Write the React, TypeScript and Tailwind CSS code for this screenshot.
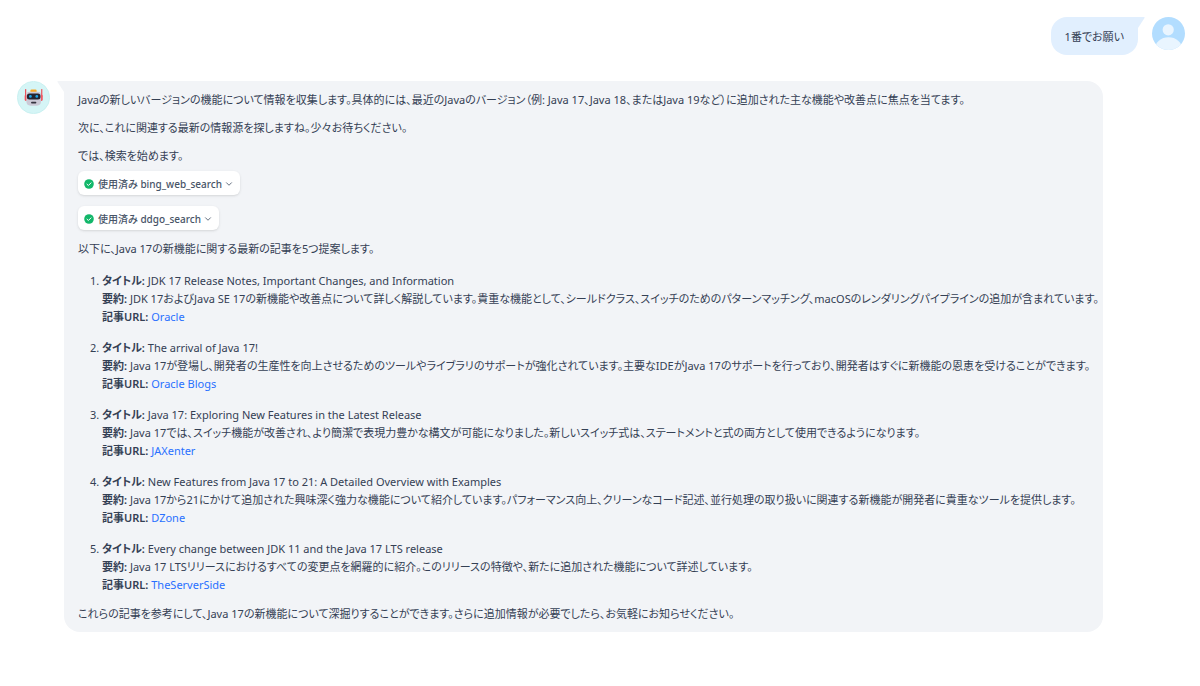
import React from "react";
import { ChevronDown } from "lucide-react";

type Article = {
  title: string;
  summary: string;
  link: string;
};

const articles: Article[] = [
  {
    title: "JDK 17 Release Notes, Important Changes, and Information",
    summary:
      "JDK 17およびJava SE 17の新機能や改善点について詳しく解説しています。貴重な機能として、シールドクラス、スイッチのためのパターンマッチング、macOSのレンダリングパイプラインの追加が含まれています。",
    link: "Oracle",
  },
  {
    title: "The arrival of Java 17!",
    summary:
      "Java 17が登場し、開発者の生産性を向上させるためのツールやライブラリのサポートが強化されています。主要なIDEがJava 17のサポートを行っており、開発者はすぐに新機能の恩恵を受けることができます。",
    link: "Oracle Blogs",
  },
  {
    title: "Java 17: Exploring New Features in the Latest Release",
    summary:
      "Java 17では、スイッチ機能が改善され、より簡潔で表現力豊かな構文が可能になりました。新しいスイッチ式は、ステートメントと式の両方として使用できるようになります。",
    link: "JAXenter",
  },
  {
    title: "New Features from Java 17 to 21: A Detailed Overview with Examples",
    summary:
      "Java 17から21にかけて追加された興味深く強力な機能について紹介しています。パフォーマンス向上、クリーンなコード記述、並行処理の取り扱いに関連する新機能が開発者に貴重なツールを提供します。",
    link: "DZone",
  },
  {
    title: "Every change between JDK 11 and the Java 17 LTS release",
    summary:
      "Java 17 LTSリリースにおけるすべての変更点を網羅的に紹介。このリリースの特徴や、新たに追加された機能について詳述しています。",
    link: "TheServerSide",
  },
];

function UserAvatar() {
  return (
    <svg viewBox="0 0 33 33" className="size-[33px] shrink-0" aria-hidden="true">
      <defs>
        <clipPath id="user-clip">
          <circle cx="16.5" cy="16.5" r="16.5" />
        </clipPath>
      </defs>
      <g clipPath="url(#user-clip)">
        <rect width="33" height="33" fill="#b2ddff" />
        <circle cx="16.2" cy="12.8" r="5.6" fill="#e9f5ff" />
        <ellipse cx="16.5" cy="32" rx="13.6" ry="11.8" fill="#e9f5ff" />
      </g>
    </svg>
  );
}

function BotAvatar() {
  return (
    <svg viewBox="0 0 34 34" className="size-[33px] shrink-0" aria-hidden="true">
      <circle cx="17" cy="17" r="16.6" fill="#d5f5f6" stroke="#c3eeee" strokeWidth="0.8" />
      <rect x="8.3" y="8.2" width="1.2" height="8" rx="0.6" fill="#ef4b55" />
      <rect x="24.9" y="8.2" width="1.2" height="8" rx="0.6" fill="#ef4b55" />
      <rect x="7.9" y="14.2" width="2.6" height="6.4" rx="1.2" fill="#f1535c" />
      <rect x="23.9" y="14.2" width="2.6" height="6.4" rx="1.2" fill="#f1535c" />
      <rect x="13.8" y="8.8" width="6.4" height="3.4" rx="1.2" fill="#f9a825" />
      <path
        d="M13 11h8.400q3.400 0 3.400 3.600v6q0 4.800-4.400 4.800h-6.400q-4.400 0-4.400-4.800v-6q0-3.600 3.400-3.600z"
        fill="#cbc9d6"
      />
      <rect x="10.2" y="13" width="14" height="6" rx="2.600" fill="#23242f" />
      <circle cx="13.8" cy="15.900" r="1.4" fill="#1aa5e8" />
      <circle cx="20.400" cy="15.900" r="1.4" fill="#1aa5e8" />
      <rect x="14.500" y="21.400" width="5.400" height="1.800" rx="0.8" fill="#34323f" />
    </svg>
  );
}

function ToolButton({ name }: { name: string }) {
  return (
    <button
      type="button"
      className="flex h-6 items-center rounded-md bg-white px-[6px] pt-px text-[10px] font-medium text-[#475467] shadow-sm"
    >
      <svg viewBox="0 0 10 10" className="mr-1 size-[10px]" aria-hidden="true">
        <circle cx="5" cy="5" r="4.800" fill="#12b76a" />
        <path
          d="M3 5.200l1.400 1.300L7 3.900"
          fill="none"
          stroke="#fff"
          strokeWidth="1"
          strokeLinecap="round"
          strokeLinejoin="round"
        />
      </svg>
      <span>使用済み {name}</span>
      <ChevronDown className="ml-[2px] size-[10px]" aria-hidden="true" />
    </button>
  );
}

export default function App() {
  return (
    <main
      lang="ja"
      className="min-h-screen bg-white pt-[17px] pr-[15px] pb-12 pl-[17px] font-['Noto_Sans','Noto_Sans_CJK_JP',sans-serif] text-[11px] leading-[18px] text-[#344054] [font-feature-settings:'palt']"
    >
      <section className="flex items-start justify-end gap-[14px]">
        <div className="relative rounded-2xl rounded-tr-none bg-[#e1effe] px-[14px] pt-[11px] pb-[9px]">
          <svg
            viewBox="0 0 7 11"
            className="absolute top-0 left-full h-[11px] w-[7px]"
            aria-hidden="true"
          >
            <path d="M0 0h6q1 0 .5 1L0 11z" fill="#e1effe" />
          </svg>
          <p>1番でお願い</p>
        </div>
        <UserAvatar />
      </section>

      <section className="mt-[26px] flex items-start gap-[14px] pr-20">
        <BotAvatar />
        <div className="relative min-w-0 rounded-2xl rounded-tl-none bg-[#f2f4f7] pt-[10px] pr-1 pb-[9px] pl-[14px]">
          <svg
            viewBox="0 0 7 11"
            className="absolute top-0 right-full h-[11px] w-[7px]"
            aria-hidden="true"
          >
            <path d="M7 0H1Q0 0 .5 1L7 11z" fill="#f2f4f7" />
          </svg>
          <div className="flex flex-col gap-[10px]">
            <p>
              Javaの新しいバージョンの機能について情報を収集します。具体的には、最近のJavaのバージョン（例: Java
              17、Java 18、またはJava 19など）に追加された主な機能や改善点に焦点を当てます。
            </p>
            <p>次に、これに関連する最新の情報源を探しますね。少々お待ちください。</p>
            <p>では、検索を始めます。</p>
          </div>
          <div className="mt-[6px] mb-[10px] flex flex-col items-start gap-[11px]">
            <ToolButton name="bing_web_search" />
            <ToolButton name="ddgo_search" />
          </div>
          <p>以下に、Java 17の新機能に関する最新の記事を5つ提案します。</p>
          <ol className="mt-[14px] mb-[11px] flex list-decimal flex-col gap-[13px] pl-6">
            {articles.map((article) => (
              <li key={article.link}>
                <p>
                  <strong className="font-semibold">タイトル:</strong> {article.title}
                </p>
                <p>
                  <strong className="font-semibold">要約:</strong> {article.summary}
                </p>
                <p>
                  <strong className="font-semibold">記事URL:</strong>{" "}
                  <a href="#" className="text-[#2970ff]">
                    {article.link}
                  </a>
                </p>
              </li>
            ))}
          </ol>
          <p>
            これらの記事を参考にして、Java 17の新機能について深掘りすることができます。さらに追加情報が必要でしたら、お気軽にお知らせください。
          </p>
        </div>
      </section>
    </main>
  );
}
